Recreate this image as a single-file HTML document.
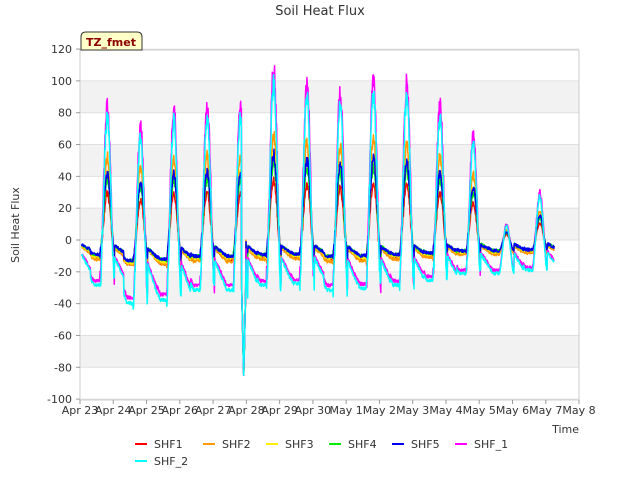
<!DOCTYPE html>
<html><head><meta charset="utf-8"><style>
body{margin:0;background:#fff;font-family:"Liberation Sans",sans-serif}
svg{display:block}
text{font-family:"DejaVu Sans","Liberation Sans",sans-serif;font-size:11px;fill:#333}
</style></head><body>
<svg id="s" width="640" height="480" xmlns="http://www.w3.org/2000/svg">
<rect width="640" height="480" fill="#fff"/>
<g id="bands"></g>
<rect x="80" y="50" width="499" height="350" fill="none" stroke="#ccc"/>
<g id="data"></g>
<text x="320" y="15" text-anchor="middle" style="font-size:13px">Soil Heat Flux</text>
<text transform="translate(19,225) rotate(-90)" text-anchor="middle" style="font-size:11px">Soil Heat Flux</text>
<text x="579" y="433" text-anchor="end">Time</text>
<g id="ax"></g>
<path d="M81,50 L81,37 Q81,32 86,32 L137,32 Q142,32 142,37 L142,50 Z" fill="#ffffc8" stroke="#333"/>
<text x="111" y="46" text-anchor="middle" style="font-size:11px;font-weight:bold;fill:#8b0000">TZ_fmet</text>
<g id="leg"></g>
</svg>
<script>
var NS="http://www.w3.org/2000/svg";
function el(p,t,a,txt){var e=document.createElementNS(NS,t);for(var k in a)e.setAttribute(k,a[k]);if(txt!=null)e.textContent=txt;document.getElementById(p).appendChild(e);return e;}
function Y(v){return 240-v*1.591;}
function X(t){return 80+t*33.27;}
[[100,80],[60,40],[20,0],[-20,-40],[-60,-80]].forEach(function(b){el("bands","rect",{x:80,y:Y(b[0]),width:499,height:Y(b[1])-Y(b[0]),fill:"#f2f2f2"});});
for(var v=-100;v<=120;v+=20){el("bands","line",{x1:80,x2:579,y1:Y(v),y2:Y(v),stroke:"#e0e0e0"});el("ax","text",{x:72,y:Y(v)+4,"text-anchor":"end"},v);el("ax","line",{x1:76,x2:80,y1:Y(v),y2:Y(v),stroke:"#999"});}
var days=["Apr 23","Apr 24","Apr 25","Apr 26","Apr 27","Apr 28","Apr 29","Apr 30","May 1","May 2","May 3","May 4","May 5","May 6","May 7","May 8"];
days.forEach(function(d,i){el("ax","text",{x:X(i),y:414,"text-anchor":"middle"},d);el("ax","line",{x1:X(i),x2:X(i),y1:400,y2:404,stroke:"#999"});});
var peak=[0,84,72,83,85,84,108,99,94,101,98,84,66,10,30,30];
var trough=[-22,-27,-38,-36,-30,-30,-27,-26,-30,-29,-27,-24,-20,-20,-18,-18];
var S=[["#ff0000",0.35,0.55],["#ff9900",0.62,0.6],["#ffee00",0.5,0.5],["#00ee00",0.45,0.45],["#0000ee",0.5,0.45],["#ff00ff",1.0,0.95],["#00ffff",0.9,1.05]];
var seed=1;function rnd(){seed=(seed*16807)%2147483647;return seed/2147483647;}
S.forEach(function(s,si){
 var d="";
 for(var t=0.05;t<=14.25;t+=0.01){
  var u=t-0.32;var day=Math.floor(u)+1;var p=u-Math.floor(u);
  var A=peak[day],T=trough[day]*s[2];
  if(si<5)T=Math.max(T,-20)*0.75;
  var v;
  if(p>0.28&&p<0.72){var q=Math.sin(Math.PI*(p-0.28)/0.44);v=T+(A*s[1]-T)*Math.pow(q,1.7);}
  else{var r=p<0.28?(p+0.28)/0.56:(p-0.72)/0.56;v=T*(0.4+0.6*Math.min(1,r*1.5));}
  v+= (rnd()-0.5)*(p>0.28&&p<0.72?A*0.14*s[1]:2);
  if(t>4.85&&t<4.98){v=Math.min(v,-85+(Math.abs(t-4.92)*900));}
  d+=(d?"L":"M")+X(t).toFixed(1)+","+Y(v).toFixed(1);
 }
 el("data","path",{d:d,fill:"none",stroke:s[0],"stroke-width":1.5,"stroke-linejoin":"round"});
});
var L=[["SHF1","#ff0000",135,444],["SHF2","#ff9900",203,444],["SHF3","#ffee00",266,444],["SHF4","#00ee00",329,444],["SHF5","#0000ee",392,444],["SHF_1","#ff00ff",455,444],["SHF_2","#00ffff",135,461]];
L.forEach(function(l){el("leg","line",{x1:l[2],x2:l[2]+12,y1:l[3],y2:l[3],stroke:l[1],"stroke-width":2});el("leg","text",{x:l[2]+19,y:l[3]+4},l[0]);});
</script>
</body></html>
